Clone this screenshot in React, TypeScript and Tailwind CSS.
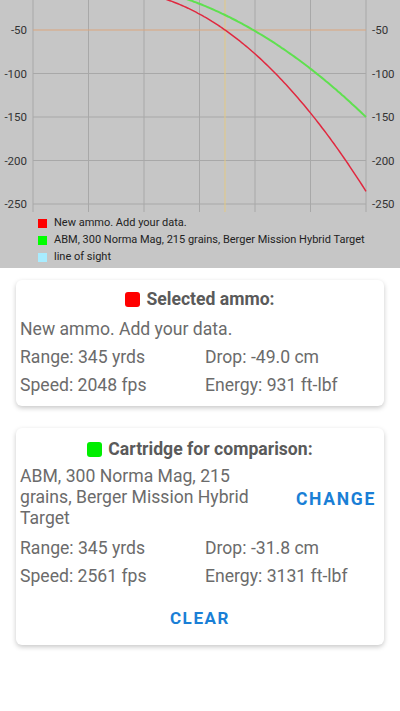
import React from 'react'

const gridX = [33, 88.5, 144, 199.5, 255, 310.5, 366]
const gridY = [
  { y: 30, label: '-50' },
  { y: 73.5, label: '-100' },
  { y: 117, label: '-150' },
  { y: 160.5, label: '-200' },
  { y: 204, label: '-250' },
]

function curve(x0: number, x1: number, f: (t: number) => number, origin: number) {
  const pts: string[] = []
  for (let x = x0; x <= x1; x += 2) {
    pts.push(`${x},${f(x - origin).toFixed(1)}`)
  }
  return pts.join(' ')
}

function Chart() {
  const red = curve(140, 366, (t) => 0.348 * t + 0.003123 * t * t, 168)
  const green = curve(150, 366, (t) => 4 + 0.397 * t + 0.00171 * t * t, 200)
  return (
    <div className="bg-[#c6c6c6] h-[268px] flex flex-col">
      <svg width="400" height="214" className="block shrink-0">
        {gridX.map((x) => (
          <line key={x} x1={x} y1={0} x2={x} y2={212} stroke="#a8a8a8" strokeWidth="1" />
        ))}
        {gridY.map((g) => (
          <line
            key={g.y}
            x1={33}
            y1={g.y}
            x2={366}
            y2={g.y}
            stroke={g.y === 30 ? '#dba57c' : '#a8a8a8'}
            strokeWidth="1"
          />
        ))}
        <line x1={225} y1={0} x2={225} y2={212} stroke="#e3c983" strokeWidth="1" />
        <polyline points={green} fill="none" stroke="#5fe04f" strokeWidth="2" strokeLinejoin="round" />
        <polyline points={red} fill="none" stroke="#e0283f" strokeWidth="1.5" strokeLinejoin="round" />
        {gridY.map((g) => (
          <text
            key={'l' + g.y}
            x={27}
            y={g.y + 4}
            textAnchor="end"
            fontSize="11.5"
            fill="#333"
            fontFamily="Roboto, 'Noto Sans', sans-serif"
          >
            {g.label}
          </text>
        ))}
        {gridY.map((g) => (
          <text
            key={'r' + g.y}
            x={372}
            y={g.y + 4}
            fontSize="11.5"
            fill="#333"
            fontFamily="Roboto, 'Noto Sans', sans-serif"
          >
            {g.label}
          </text>
        ))}
      </svg>
      <div className="pl-[38px] pt-[1px] flex flex-col font-['Roboto',sans-serif] text-[11px] text-[#222]">
        <div className="h-[17px] flex items-center gap-[7px]">
          <span className="w-[9px] h-[9px] bg-[#ff0000]" />
          <span>New ammo. Add your data.</span>
        </div>
        <div className="h-[17px] flex items-center gap-[7px]">
          <span className="w-[9px] h-[9px] bg-[#00ff00]" />
          <span>ABM, 300 Norma Mag, 215 grains, Berger Mission Hybrid Target</span>
        </div>
        <div className="h-[17px] flex items-center gap-[7px]">
          <span className="w-[9px] h-[9px] bg-[#a8ecff]" />
          <span>line of sight</span>
        </div>
      </div>
    </div>
  )
}

function Stats({ range, drop, speed, energy }: { range: string; drop: string; speed: string; energy: string }) {
  return (
    <div className="grid grid-cols-[185px_1fr]">
      <div className="h-[28px] flex items-center">Range: {range}</div>
      <div className="h-[28px] flex items-center">Drop: {drop}</div>
      <div className="h-[28px] flex items-center">Speed: {speed}</div>
      <div className="h-[28px] flex items-center">Energy: {energy}</div>
    </div>
  )
}

export default function App() {
  return (
    <div className="w-[400px] h-[711px] bg-white overflow-hidden font-['Roboto',sans-serif]">
      <Chart />

      <div className="px-[16px] pt-[12px] flex flex-col gap-[22px]">
        {/* Selected ammo */}
        <div className="bg-white rounded-[6px] shadow-[0_2px_5px_rgba(0,0,0,0.22)] pt-[8px] pb-[7px] px-[4px] text-[17.6px] text-[#6b6b6b]">
          <div className="h-[22px] flex items-center justify-center gap-[6px]">
            <span className="w-[15px] h-[15px] rounded-[3px] bg-[#ff0000]" />
            <span className="font-bold text-[#5a5a5a]">Selected ammo:</span>
          </div>
          <div className="mt-[5px] h-[28px] flex items-center">New ammo. Add your data.</div>
          <Stats range="345 yrds" drop="-49.0 cm" speed="2048 fps" energy="931 ft-lbf" />
        </div>

        {/* Cartridge for comparison */}
        <div className="bg-white rounded-[6px] shadow-[0_2px_5px_rgba(0,0,0,0.22)] pt-[10px] pb-[8px] px-[4px] text-[17.6px] text-[#6b6b6b]">
          <div className="h-[22px] flex items-center justify-center gap-[6px]">
            <span className="w-[15px] h-[15px] rounded-[3px] bg-[#00ee00]" />
            <span className="font-bold text-[#5a5a5a]">Cartridge for comparison:</span>
          </div>
          <div className="mt-[6px] flex items-center">
            <div className="w-[252px] leading-[21px]">ABM, 300 Norma Mag, 215 grains, Berger Mission Hybrid Target</div>
            <div className="flex-1 flex justify-end pr-[4px] pt-[3px]">
              <span className="font-bold text-[#1a7fd6] tracking-[1.7px] text-[17.5px]">CHANGE</span>
            </div>
          </div>
          <div className="mt-[5px]">
            <Stats range="345 yrds" drop="-31.8 cm" speed="2561 fps" energy="3131 ft-lbf" />
          </div>
          <div className="mt-[11px] h-[36px] flex items-center justify-center">
            <span className="font-bold text-[#1a7fd6] tracking-[1.6px] text-[17px]">CLEAR</span>
          </div>
        </div>
      </div>
    </div>
  )
}
